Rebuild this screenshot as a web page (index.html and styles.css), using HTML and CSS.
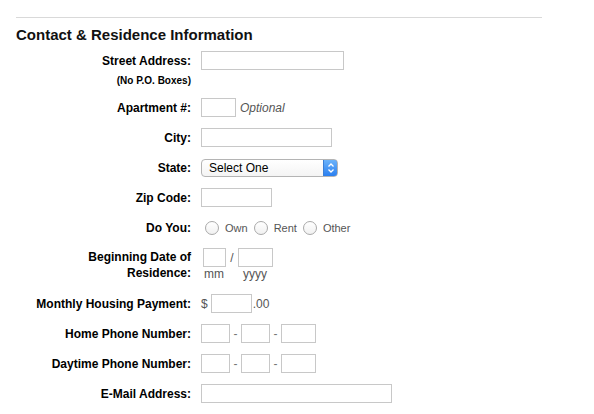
FILE: index.html
```html
<!DOCTYPE html>
<html>
<head>
    <title>Contact &amp; Residence Information</title>
    <link rel="stylesheet" href="styles.css">
</head>
<body>
    <div class="page">
        <hr class="rule">
        <h2 class="section-title">Contact &amp; Residence Information</h2>

        <div class="form">
            <div class="row row-tight">
                <label class="label">Street Address:</label>
                <div class="field"><input class="text w-street" type="text"></div>
            </div>
            <div class="row row-note">
                <span class="label note">(No P.O. Boxes)</span>
            </div>

            <div class="row">
                <label class="label">Apartment #:</label>
                <div class="field">
                    <input class="text w-apt" type="text">
                    <span class="hint-italic">Optional</span>
                </div>
            </div>

            <div class="row">
                <label class="label">City:</label>
                <div class="field"><input class="text w-city" type="text"></div>
            </div>

            <div class="row">
                <label class="label">State:</label>
                <div class="field">
                    <span class="select">
                        <select>
                            <option>Select One</option>
                        </select>
                        <span class="select-arrow">
                            <svg width="8" height="12" viewBox="0 0 8 12">
                                <path d="M1.5 4.5 L4 2 L6.5 4.5" fill="none" stroke="#fff" stroke-width="1.3"/>
                                <path d="M1.5 7.5 L4 10 L6.5 7.5" fill="none" stroke="#fff" stroke-width="1.3"/>
                            </svg>
                        </span>
                    </span>
                </div>
            </div>

            <div class="row">
                <label class="label">Zip Code:</label>
                <div class="field"><input class="text w-zip" type="text"></div>
            </div>

            <div class="row">
                <label class="label">Do You:</label>
                <div class="field radios">
                    <label class="opt"><input type="radio" name="own" class="radio"> Own</label>
                    <label class="opt"><input type="radio" name="own" class="radio"> Rent</label>
                    <label class="opt"><input type="radio" name="own" class="radio"> Other</label>
                </div>
            </div>

            <div class="row row-top">
                <label class="label label-2line">Beginning Date of<br>Residence:</label>
                <div class="field date">
                    <div class="date-inputs">
                        <input class="text w-mm" type="text">
                        <span class="sep">/</span>
                        <input class="text w-yyyy" type="text">
                    </div>
                    <div class="date-hints">
                        <span class="hint-mm">mm</span>
                        <span class="hint-yyyy">yyyy</span>
                    </div>
                </div>
            </div>

            <div class="row">
                <label class="label">Monthly Housing Payment:</label>
                <div class="field">
                    <span class="unit">$</span>
                    <input class="text w-money" type="text">
                    <span class="unit cents">.00</span>
                </div>
            </div>

            <div class="row">
                <label class="label">Home Phone Number:</label>
                <div class="field phone">
                    <input class="text w-area" type="text">
                    <span class="dash">-</span>
                    <input class="text w-area" type="text">
                    <span class="dash">-</span>
                    <input class="text w-line" type="text">
                </div>
            </div>

            <div class="row">
                <label class="label">Daytime Phone Number:</label>
                <div class="field phone">
                    <input class="text w-area" type="text">
                    <span class="dash">-</span>
                    <input class="text w-area" type="text">
                    <span class="dash">-</span>
                    <input class="text w-line" type="text">
                </div>
            </div>

            <div class="row">
                <label class="label">E-Mail Address:</label>
                <div class="field"><input class="text w-email" type="text"></div>
            </div>
        </div>
    </div>
</body>
</html>
```

FILE: styles.css
```css
body {
    margin: 0;
    font-family: "Liberation Sans", Arial, sans-serif;
    color: #000;
    background: #fff;
}
.page {
    padding: 17px 0 0 16px;
    width: 526px;
}
.rule {
    margin: 0;
    border: none;
    border-top: 1px solid #d9d9d9;
}
.section-title {
    margin: 8px 0 7px 0;
    font-size: 15px;
    line-height: 18px;
    font-weight: bold;
    color: #111;
}
.row {
    display: flex;
    align-items: center;
    min-height: 19px;
    margin-bottom: 11px;
}
.row-tight {
    margin-bottom: 5px;
}
.row-note {
    min-height: 12px;
}
.row-top {
    align-items: flex-start;
    margin-bottom: 13px;
}
.label {
    width: 175px;
    margin-right: 10px;
    text-align: right;
    font-size: 12px;
    font-weight: bold;
    line-height: 14px;
    flex-shrink: 0;
}
.label-2line {
    line-height: 16px;
    padding-top: 1px;
}
.note {
    font-size: 10px;
    line-height: 12px;
}
.field {
    display: flex;
    align-items: center;
    font-size: 12px;
}
.text {
    box-sizing: border-box;
    height: 19px;
    margin: 0;
    padding: 0 3px;
    border: 1px solid #c8c8c8;
    background: #fff;
    font-family: inherit;
    font-size: 12px;
}
.w-street { width: 143px; }
.w-apt { width: 35px; }
.w-city { width: 131px; }
.w-zip { width: 71px; }
.w-mm { width: 23px; margin-left: 2px; }
.w-yyyy { width: 35px; }
.w-money { width: 41px; }
.w-area { width: 29px; }
.w-line { width: 35px; }
.w-email { width: 191px; }

.hint-italic {
    margin-left: 4px;
    font-style: italic;
    color: #555;
}

/* select, mac style */
.select {
    position: relative;
    display: inline-block;
    box-sizing: border-box;
    width: 137px;
    height: 18px;
    border: 1px solid #b4b4b4;
    border-radius: 4px;
    background: linear-gradient(#fff, #f4f4f4);
    overflow: hidden;
}
.select select {
    appearance: none;
    -webkit-appearance: none;
    border: none;
    background: transparent;
    width: 100%;
    height: 16px;
    padding: 0 0 0 7px;
    margin: 0;
    font-family: inherit;
    font-size: 12px;
    line-height: 16px;
    color: #000;
}
.select-arrow {
    position: absolute;
    top: -1px;
    right: -1px;
    width: 15px;
    height: 18px;
    display: flex;
    align-items: center;
    justify-content: center;
    background: linear-gradient(#6cb3fa, #2a7ff0);
    border: 1px solid #3b7fd6;
    box-sizing: border-box;
    border-radius: 0 4px 4px 0;
}

/* radios */
.radios {
    padding-left: 4px;
}
.opt {
    display: inline-flex;
    align-items: center;
    gap: 6px;
    margin-right: 6px;
    font-size: 11px;
    color: #555;
}
.radio {
    appearance: none;
    -webkit-appearance: none;
    box-sizing: border-box;
    width: 14px;
    height: 14px;
    margin: 0;
    border: 1px solid #a9a9a9;
    border-radius: 50%;
    background: linear-gradient(#fff, #f1f1f1);
}

/* date */
.date {
    flex-direction: column;
    align-items: flex-start;
}
.date-inputs {
    display: flex;
    align-items: center;
}
.sep {
    width: 12px;
    text-align: center;
    color: #555;
}
.date-hints {
    display: flex;
    line-height: 14px;
    color: #555;
    font-size: 12px;
}
.hint-mm {
    margin-left: 3px;
    width: 39px;
}

.unit {
    color: #555;
    margin-right: 3px;
}
.cents {
    margin: 0 0 0 1px;
}
.dash {
    width: 11px;
    text-align: center;
    color: #777;
}
```
